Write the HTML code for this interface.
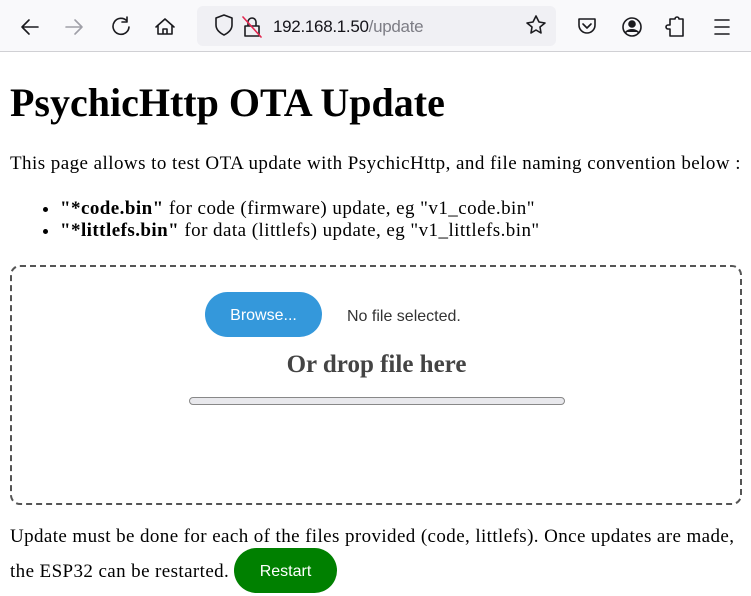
<!DOCTYPE html>
<html><head><meta charset="utf-8"><style>
*{box-sizing:border-box}
body{margin:0;width:751px;height:596px;overflow:hidden;background:#fff;font-family:"Liberation Serif",serif;color:#000}
.tb{height:52px;background:#f9f9fb;border-bottom:1px solid #d0d0d4;position:relative}
.tb svg{position:absolute}
.url{position:absolute;left:197px;top:6px;width:359px;height:40px;background:#f0f0f4;border-radius:6px}
.url span{position:absolute;left:76px;top:11px;font-family:"Liberation Sans",sans-serif;font-size:17px;color:#15141a;letter-spacing:-0.3px}
h1{position:absolute;left:10px;top:79px;margin:0;font-size:40px;font-weight:bold;line-height:47px;white-space:nowrap}
.p1{position:absolute;left:10px;top:153px;font-size:19px;margin:0;white-space:nowrap;letter-spacing:0.45px}
ul{position:absolute;left:10px;top:198px;margin:0;padding-left:50px;font-size:19px;line-height:22px;letter-spacing:0.45px;white-space:nowrap}
.drop{position:absolute;left:10px;top:265px;width:732px;height:240px;border:2px dashed #555;border-radius:10px}
.btn{position:absolute;left:205px;top:292px;width:117px;height:45px;background:#3498db;border-radius:23px;color:#fff;font-family:"Liberation Sans",sans-serif;font-size:16px;text-align:center;line-height:47px}
.nf{position:absolute;left:347px;top:308px;font-family:"Liberation Sans",sans-serif;font-size:16px;color:#333}
.or{position:absolute;left:0;width:751px;top:351px;text-align:center;font-size:25px;font-weight:bold;color:#444;padding-left:2px}
.bar{position:absolute;left:189px;top:397px;width:376px;height:8px;border:1px solid #888;border-radius:4px;background:#e8e8ec}
.l{position:absolute;left:10px;font-size:19px;white-space:nowrap;letter-spacing:0.4px;line-height:22px}
.rs{position:absolute;left:234px;top:548px;width:103px;height:45px;background:#008000;border-radius:23px;color:#fff;font-family:"Liberation Sans",sans-serif;font-size:16px;text-align:center;line-height:47px}
</style></head><body>
<div class="tb">
<svg width="751" height="52" fill="none" stroke="#1b1b1f" stroke-width="1.6" stroke-linecap="round" stroke-linejoin="round">
<path d="M22 27h16M22 27l7-7M22 27l7 7"/>
<path d="M66 27h16M82 27l-7-7M82 27l-7 7" stroke="#a0a0a8"/>
<path d="M127 21a8 8 0 1 0 2 6M127 17v5h-5"/>
<path d="M156 27l9-8 9 8M158 25v9h14v-9M163 34v-5h4v5"/>
</svg>
<div class="url"><span>192.168.1.50<span style="position:static;color:#7d7d85">/update</span></span></div>
<svg width="751" height="52" fill="none" stroke="#1b1b1f" stroke-width="1.6" stroke-linecap="round" stroke-linejoin="round">
<path d="M216 18l8-3 8 3v7c0 5-4 8-8 10-4-2-8-5-8-10z"/>
<path d="M245 26h14v10h-14zM248 26v-4a4 4 0 0 1 8 0v4"/>
<path d="M243 17l18 20" stroke="#e22850"/>
<path d="M536 16l3 6 6 1-5 4 1 6-5-3-5 3 1-6-5-4 6-1z"/>
<path d="M579 19h16v6a8 8 0 0 1-16 0zM583 24l4 4 4-4"/>
<circle cx="632" cy="27" r="9"/><circle cx="632" cy="24" r="3" fill="#1b1b1f"/><path d="M626 32c3-3 9-3 12 0" fill="#1b1b1f"/>
<path d="M670 36v-7h-2a2 2 0 0 1 0-4h2v-6h5a2 2 0 0 1 4 0h4v17z"/>
<path d="M715 20h14M715 27h14M715 34h14"/>
</svg>
</div>
<h1>PsychicHttp OTA Update</h1>
<p class="p1">This page allows to test OTA update with PsychicHttp, and file naming convention below :</p>
<ul><li><b>"*code.bin"</b> for code (firmware) update, eg "v1_code.bin"</li><li><b>"*littlefs.bin"</b> for data (littlefs) update, eg "v1_littlefs.bin"</li></ul>
<div class="drop"></div>
<div class="btn">Browse...</div>
<div class="nf">No file selected.</div>
<div class="or">Or drop file here</div>
<div class="bar"></div>
<div class="l" style="top:526px">Update must be done for each of the files provided (code, littlefs). Once updates are made,</div>
<div class="l" style="top:561px">the ESP32 can be restarted.</div>
<div class="rs">Restart</div>
</body></html>
